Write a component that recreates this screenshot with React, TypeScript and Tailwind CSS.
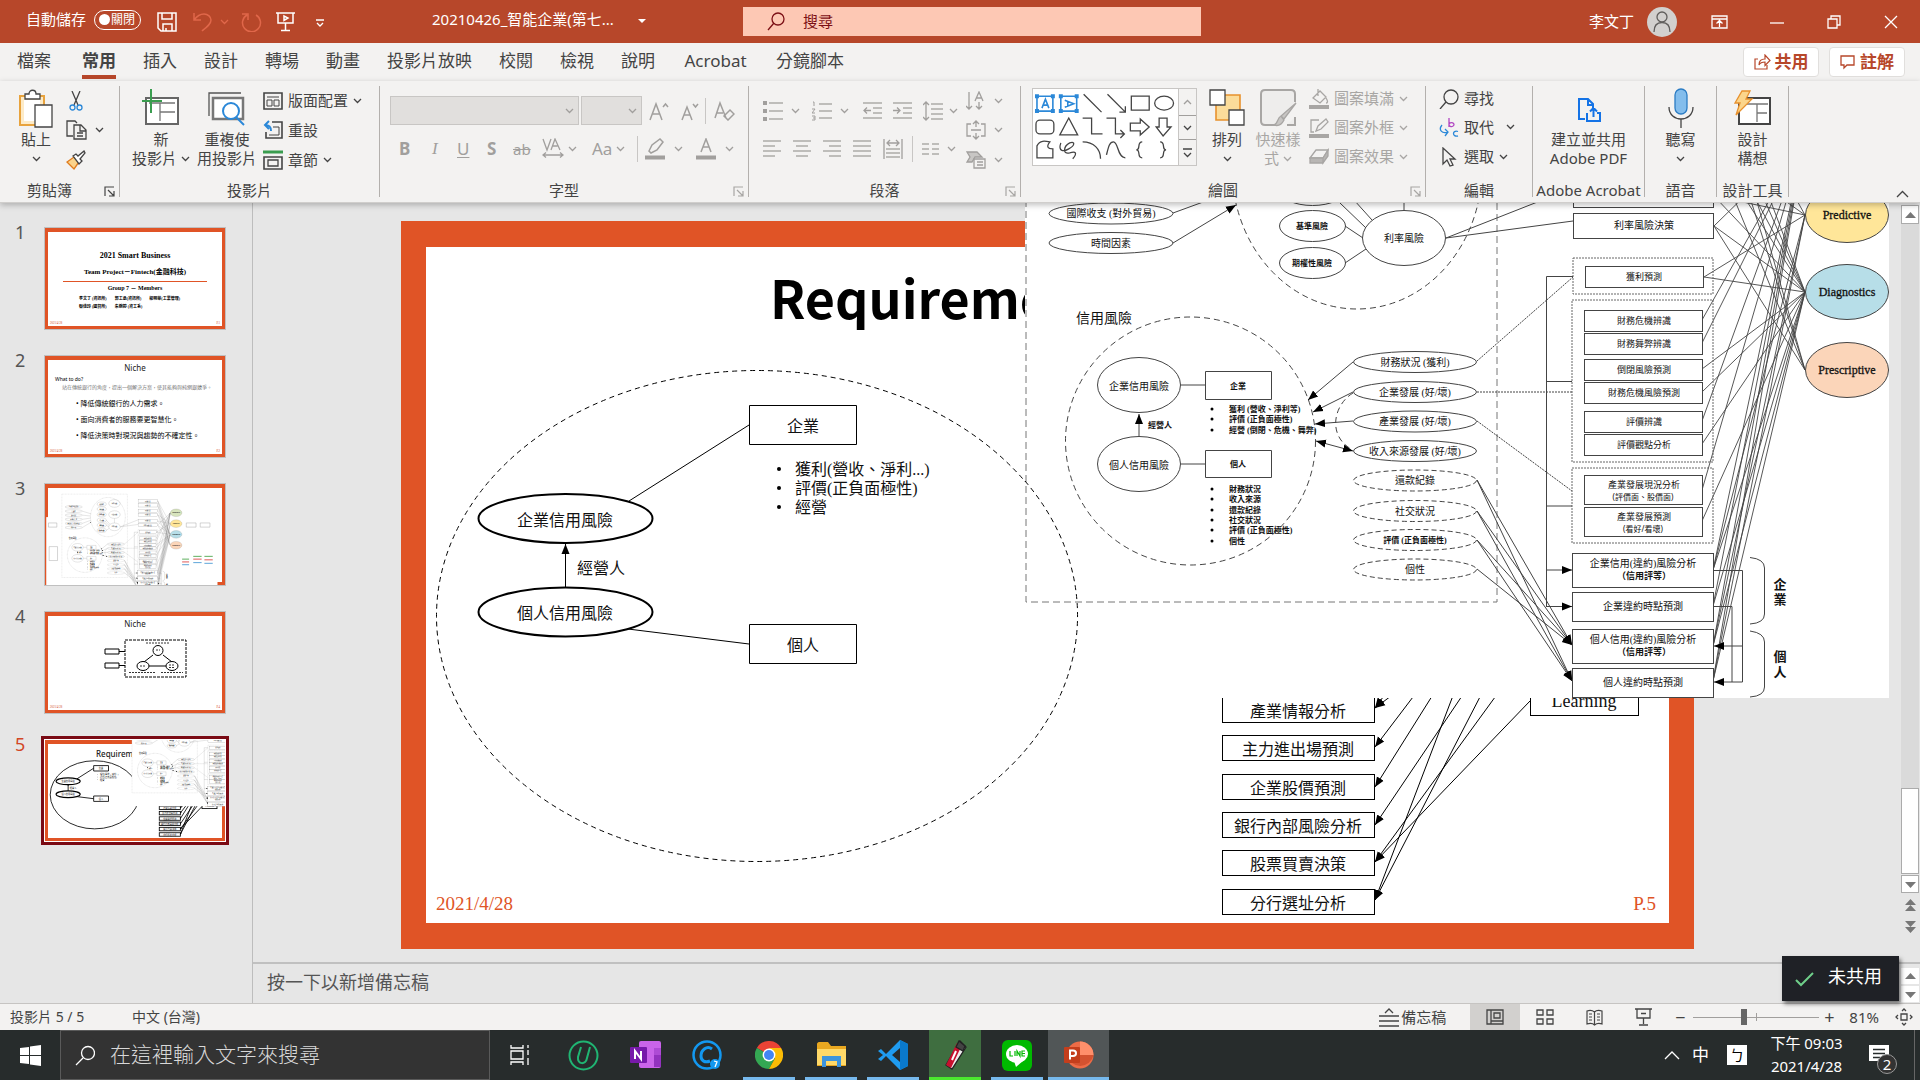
import React from "react";

const UI = "font-['Noto_Sans','Noto_Sans_CJK_TC',sans-serif]";
const SERIF = "font-['Liberation_Serif','Noto_Sans_CJK_TC',serif]";

type P = { children?: React.ReactNode };

function Icon({ w = 20, h = 20, box, children, cls = "" }: P & { w?: number; h?: number; box?: string; cls?: string }) {
  return (
    <svg width={w} height={h} viewBox={box ?? `0 0 ${w} ${h}`} fill="none" stroke="currentColor" strokeWidth="1.3" className={`shrink-0 ${cls}`} aria-hidden="true">
      {children}
    </svg>
  );
}

function Chev({ cls = "" }: { cls?: string }) {
  return (
    <Icon w={9} h={6} cls={cls}>
      <path d="M1 1l3.5 3.5L8 1" />
    </Icon>
  );
}

/* ---------- title bar ---------- */

function TitleBar() {
  return (
    <header className="flex h-[43px] shrink-0 items-center bg-[#b7472a] text-[15px] text-white">
      <div className="flex w-[743px] shrink-0 items-center pl-[26px]">
        <span className="w-[68px] pb-1">自動儲存</span>
        <button className="mb-1 flex h-[20px] w-[47px] items-center rounded-full border border-white pl-1 text-[12px] leading-4">
          <span className="mr-[1px] size-[11px] rounded-full bg-white" />
          關閉
        </button>
        <button aria-label="儲存" className="ml-4">
          <Icon w={20} h={20}><path d="M1 1h18v18H4l-3-3zM5 1v6h10V1M6 19v-7h9v7M9 19v-3" strokeWidth="1.500" /></Icon>
        </button>
        <button aria-label="復原" className="ml-4 text-[#e0674a]">
          <Icon w={19} h={20}><path d="M1 1v7h7M1 8c3-4 6-6 10-6 4 0 7 3 7 6 0 4-4 7-9 11" strokeWidth="1.500" /></Icon>
        </button>
        <Chev cls="ml-2 text-[#e0674a]" />
        <button aria-label="重做" className="ml-3 text-[#e0674a]">
          <Icon w={21} h={20}><path d="M6 3a9 9 0 1 0 9 0M1 2h6v6" strokeWidth="1.500" /></Icon>
        </button>
        <button aria-label="從首張投影片" className="ml-[14px]">
          <Icon w={19} h={20}><path d="M0 1h19M2 1v10h15V1M9.500 11v7M5 18.500h9M8 4v4.500L12 6z" strokeWidth="1.500" /></Icon>
        </button>
        <button aria-label="自訂" className="ml-[20px] mt-1">
          <Icon w={10} h={9}><path d="M1 1h8M2 4l3 3 3-3" /></Icon>
        </button>
        <span className="ml-[107px] whitespace-nowrap pb-1">20210426_智能企業(第七...</span>
        <Icon w={8} h={5} cls="ml-6"><path d="M0 0h8L4 4z" fill="#fff" stroke="none" /></Icon>
      </div>
      <label className="flex h-[29px] w-[458px] items-center bg-[#fdc8b4] pl-6 text-[#7c1016]">
        <Icon w={18} h={19}><circle cx="11" cy="7" r="6" /><path d="M7 11l-6 7" /></Icon>
        <span className="sr-only">搜尋</span>
        <input className="ml-[18px] w-full bg-transparent text-[15px] outline-none placeholder:text-[#7c1016]" placeholder="搜尋" />
      </label>
      <div className="ml-auto flex items-center pr-[22px]">
        <span>李文丁</span>
        <span className="ml-[13px] flex size-[30px] items-center justify-center rounded-full bg-[#d2d0ce] text-[#605e5c]">
          <Icon w={20} h={22}><circle cx="10" cy="6" r="5" /><path d="M2 21c0-6 3-9.500 8-9.500s8 3.500 8 9.500" /></Icon>
        </span>
        <button aria-label="功能區顯示選項" className="ml-[34px]"><Icon w={17} h={14}><path d="M1 1h15v12H1zM1 4h15M8.500 12V6M5.500 8.500l3-3 3 3" /></Icon></button>
        <button aria-label="最小化" className="ml-[42px]"><Icon w={14} h={14}><path d="M0 8h14" /></Icon></button>
        <button aria-label="還原" className="ml-[43px]"><Icon w={14} h={14}><path d="M1 4h9v9H1zM4 4V1h9v9h-3" /></Icon></button>
        <button aria-label="關閉視窗" className="ml-[43px]"><Icon w={14} h={14}><path d="M1 1l12 12M13 1L1 13" /></Icon></button>
      </div>
    </header>
  );
}

/* ---------- tabs ---------- */

const TABS = ["插入", "設計", "轉場", "動畫", "投影片放映", "校閱", "檢視", "說明", "Acrobat", "分鏡腳本"];

function Tabs() {
  return (
    <nav className="flex h-[38px] shrink-0 items-start bg-[#f3f2f1] pl-[17px] text-[17px] leading-9 text-[#444]">
      <button className="mr-[31px]">檔案</button>
      <button className="mr-[27px] h-9 border-b-4 border-[#b7472a] font-bold leading-9">常用</button>
      <div className="flex gap-[27px]">
        {TABS.map((t) => <button key={t} className={`whitespace-nowrap ${t === "Acrobat" ? "min-w-[67px]" : ""}`}>{t}</button>)}
      </div>
      <div className="ml-auto mr-[15px] mt-1 flex gap-[10px] text-[#b7472a]">
        <button className="flex h-[30px] w-[76px] items-center justify-center gap-1 rounded border border-[#e1dfdd] bg-white font-bold">
          <Icon w={17} h={16}><path d="M4 5H1v10h12v-4M5 11c0-4 2-6 6-6V1l5 5.500-5 5V8c-3 0-5 1-6 3z" strokeWidth="1.200" /></Icon>共用
        </button>
        <button className="flex h-[30px] w-[76px] items-center justify-center gap-1 rounded border border-[#e1dfdd] bg-white font-bold">
          <Icon w={16} h={15}><path d="M1 1h13v9H7l-3 3v-3H1z" /></Icon>註解
        </button>
      </div>
    </nav>
  );
}

/* ---------- ribbon ---------- */

function Group({ label, cls, launcher, dim, children }: P & { label: string; cls: string; launcher?: boolean; dim?: boolean }) {
  return (
    <section className={`relative flex h-[111px] shrink-0 flex-col justify-between border-r border-[#b3b0ad] ${cls}`}>
      <div className="flex">{children}</div>
      <h2 className="whitespace-nowrap text-center text-[15px] leading-[14px]">{label}</h2>
      {launcher && (
        <button aria-label={`${label}設定`} className={`absolute bottom-0 right-1 ${dim ? "text-[#a8a6a4]" : ""}`}>
          <Icon w={11} h={11}><path d="M1 10V1h9M4 4l6 6M10 5v5H5" strokeWidth="1.200" /></Icon>
        </button>
      )}
    </section>
  );
}

function Big({ icon, cls, children }: P & { icon: React.ReactNode; cls: string }) {
  return (
    <button className={`flex shrink-0 flex-col items-center whitespace-nowrap text-[15px] leading-[19px] ${cls}`}>
      <span className="flex h-11 items-center">{icon}</span>
      {children}
    </button>
  );
}

function Row({ icon, text, chev, cls = "h-[29px]" }: { icon: React.ReactNode; text: string; chev?: boolean; cls?: string }) {
  return (
    <button className={`flex items-center gap-[5px] whitespace-nowrap ${cls}`}>
      {icon}
      <span>{text}</span>
      {chev && <Chev />}
    </button>
  );
}

const lines = (a: number[][]) => a.map(([x1, y, x2], i) => <path key={i} d={`M${x1} ${y}H${x2}`} />);

function Ribbon() {
  return (
    <div className="relative z-10 flex h-[122px] shrink-0 border-b border-[#d0cecc] bg-[#f3f2f1] pt-[5px] text-[15px] text-[#444] shadow-[0_2px_6px_rgba(0,0,0,0.25)]">
      <Group label="剪貼簿" cls="w-[120px] pr-5" launcher>
        <Big cls="ml-[14px] w-[44px]" icon={<Icon w={36} h={39}>
          <path d="M2 7h24v29H2z" fill="#fdebc8" stroke="#e8a33d" strokeWidth="2" /><path d="M6 11h16v21H6z" stroke="none" fill="#fff" />
          <path d="M7 10V5h4c0-5 7-5 7 0h4v5z" fill="#fff" /><path d="M17 16h17v22H17z" fill="#fff" /></Icon>}>
          <span>貼上</span><Chev cls="mt-[7px]" />
        </Big>
        <div className="ml-2 flex flex-col">
          <button aria-label="剪下" className="flex h-[29px] items-center pl-[3px]"><Icon w={14} h={20}><path d="M3 0l6 14M11 0L5 14" /><circle cx="3.500" cy="16.500" r="2.500" stroke="#2b88d8" /><circle cx="10.500" cy="16.500" r="2.500" stroke="#2b88d8" /></Icon></button>
          <button aria-label="複製" className="flex h-[30px] items-center gap-2"><Icon w={21} h={20}><path d="M7 16H1V1h8l2 2M8 5h7l5 5v9H8zM14 5v6h6M11 13h6M11 16h6" /></Icon><Chev /></button>
          <button aria-label="複製格式" className="flex h-[30px] items-center"><Icon w={20} h={20}><path d="M8 7l5 5-5 7-7-7z" fill="#fbd38b" stroke="#e07b1c" /><path d="M7 6l3-2 2 2 6-5 1 2-5 6 2 2-3 3z" fill="#fff" /></Icon></button>
        </div>
      </Group>

      <Group label="投影片" cls="w-[260px]">
        <Big cls="ml-[11px] w-[60px]" icon={<Icon w={38} h={38}>
          <path d="M4 9h32v26H4z" fill="#fff" stroke="#666" strokeWidth="2" /><path d="M7 14h26M18 14v18M18 23h15" stroke="#777" /><path d="M9 0v24M0 12h20" stroke="#3a9d4f" strokeWidth="2" /></Icon>}>
          <span>新</span><span className="flex items-center gap-1">投影片<Chev /></span>
        </Big>
        <Big cls="ml-[6px] w-[60px]" icon={<Icon w={38} h={36}>
          <path d="M1 26V3h32" stroke="#555" /><path d="M5 8h30v21H5z" fill="#fff" stroke="#777" strokeWidth="2.500" /><circle cx="23" cy="21" r="8" fill="#fff" stroke="#2b88d8" strokeWidth="2" /><path d="M28 27l8 8" stroke="#2b88d8" strokeWidth="2" /></Icon>}>
          <span>重複使</span><span>用投影片</span>
        </Big>
        <div className="ml-[6px]">
          <Row text="版面配置" chev icon={<Icon><path d="M1 2h18v16H1z" strokeWidth="1.600" /><path d="M4 6h12M4 9h5v6H4zM11 9h5v6h-5z" strokeWidth="1" /></Icon>} />
          <Row text="重設" cls="h-[30px]" icon={<Icon><path d="M9 2h10v16H3v-6" strokeWidth="1.600" /><path d="M10 7h6v8H6" strokeWidth="1" /><path d="M6 1L2 5l4 4M2 5c5 0 6 2 6 6" stroke="#2b88d8" strokeWidth="2" /></Icon>} />
          <Row text="章節" cls="h-[30px]" chev icon={<Icon><path d="M0 2h20" stroke="#3a9d4f" strokeWidth="3" /><path d="M1 7h18v12H1z" strokeWidth="1.600" /><path d="M5 10h10v6H5z" /></Icon>} />
        </div>
      </Group>

      <Group label="字型" cls="w-[369px]" launcher dim>
        <div className="pl-[10px] text-[#a19f9d]">
          <div className="mt-[10px] flex h-[29px] items-center">
            <select aria-label="字型" className="h-[29px] w-[189px] appearance-none border border-[#c8c6c4] bg-[#e1dfdd]" />
            <Chev cls="-ml-[14px]" />
            <select aria-label="字型大小" className="ml-[7px] h-[29px] w-[61px] appearance-none border border-[#c8c6c4] bg-[#e1dfdd]" />
            <Chev cls="-ml-[14px]" />
            <button aria-label="放大字型" className="ml-[12px]"><Icon w={20} h={20}><path d="M1 19L7 3l6 16M3 13h8M14 6l2.500-3L19 6" strokeWidth="1.500" /></Icon></button>
            <button aria-label="縮小字型" className="ml-[12px]"><Icon w={20} h={20}><path d="M1 19L6 6l5 13M3 14h6M12 3l2.500 3L17 3" strokeWidth="1.500" /></Icon></button>
            <span className="ml-[4px] h-[26px] w-px bg-[#c8c6c4]" />
            <button aria-label="清除格式" className="ml-2"><Icon w={21} h={20}><path d="M1 17L6 2l6 15M3 12h6M10 15l6-6 4 4-6 6z" strokeWidth="1.500" /></Icon></button>
          </div>
          <div className="mt-[9px] flex h-[29px] items-center text-[17px] leading-5">
            <button className="ml-[9px] w-[29px] text-left font-bold">B</button>
            <button className="w-[29px] pl-1 text-left font-['Liberation_Serif'] italic">I</button>
            <button className="w-[30px] text-left underline underline-offset-2">U</button>
            <button className="w-[26px] text-left font-bold">S</button>
            <button className="w-[29px] text-left text-[15px] line-through">ab</button>
            <button aria-label="字元間距"><Icon w={22} h={22}><path d="M1 1l4 11L9 1M9 12l4-11 5 11M10.500 8h5M1 17h20M4 14.500L1 17l3 2.500M18 14.500l3 2.500-3 2.500" /></Icon></button>
            <Chev cls="ml-1" />
            <button className="ml-[15px]">Aa</button>
            <Chev cls="ml-1" />
            <span className="ml-3 h-[26px] w-px bg-[#c8c6c4]" />
            <button aria-label="醒目提示" className="ml-[7px]"><Icon w={21} h={22}><path d="M4 13l3-6 8-6 3 3-6 8-6 3z" strokeWidth="1.500" /><path d="M0 19.500h20" strokeWidth="4" /></Icon></button>
            <Chev cls="ml-2" />
            <button aria-label="字型色彩" className="ml-[13px]"><Icon w={21} h={22}><path d="M5 14l5-13 5 13M7 9h6" strokeWidth="1.500" /><path d="M0 19.500h20" strokeWidth="4" /></Icon></button>
            <Chev cls="ml-2" />
          </div>
        </div>
      </Group>

      <Group label="段落" cls="w-[272px]" launcher dim>
        <div className="pl-[14px] text-[#a19f9d]">
          <div className="mt-[10px] flex h-[29px] items-center">
            <Icon w={20} h={20}>{lines([[6, 2, 20], [6, 10, 20], [6, 18, 20]])}<path d="M0 2h4M0 10h4M0 18h4" strokeWidth="4" /></Icon><Chev cls="ml-2" />
            <Icon w={20} h={20} cls="ml-3">{lines([[7, 3, 20], [7, 10, 20], [7, 17, 20]])}<path d="M1 1h1v4M0 8h3l-3 4h3M0 15h3v4H0M1 17h2" strokeWidth="1" /></Icon><Chev cls="ml-2" />
            <Icon w={20} h={20} cls="ml-[14px]">{lines([[0, 2, 19], [10, 7, 19], [10, 12, 19], [0, 17, 19]])}<path d="M8 9.500H1M4 6.500l-3 3 3 3" /></Icon>
            <Icon w={20} h={20} cls="ml-[10px]">{lines([[0, 2, 19], [10, 7, 19], [10, 12, 19], [0, 17, 19]])}<path d="M0 9.500h7M4 6.500l3 3-3 3" /></Icon>
            <Icon w={20} h={20} cls="ml-[10px]">{lines([[8, 3, 20], [8, 8, 20], [8, 13, 20], [8, 18, 20]])}<path d="M3 1v18M0 4l3-3 3 3M0 16l3 3 3-3" /></Icon><Chev cls="ml-[6px]" />
          </div>
          <div className="mt-[9px] flex h-[29px] items-center">
            <Icon w={20} h={18}>{lines([[0, 1, 18], [0, 6, 12], [0, 11, 18], [0, 16, 12]])}</Icon>
            <Icon w={20} h={18} cls="ml-[10px]">{lines([[0, 1, 18], [3, 6, 15], [0, 11, 18], [3, 16, 15]])}</Icon>
            <Icon w={20} h={18} cls="ml-[10px]">{lines([[0, 1, 18], [6, 6, 18], [0, 11, 18], [6, 16, 18]])}</Icon>
            <Icon w={20} h={18} cls="ml-[10px]">{lines([[0, 1, 18], [0, 6, 18], [0, 11, 18], [0, 16, 18]])}</Icon>
            <Icon w={20} h={20} cls="ml-[10px]">{lines([[3, 10, 17], [3, 14, 17], [3, 18, 17]])}<path d="M1 0v20M19 0v20M4 4h12M7 1L4 4l3 3M13 1l3 3-3 3" /></Icon>
            <span className="ml-[9px] h-[26px] w-px bg-[#c8c6c4]" />
            <Icon w={17} h={12} cls="ml-[9px]">{lines([[0, 1, 7], [0, 6, 7], [0, 11, 7], [10, 1, 17], [10, 6, 17], [10, 11, 17]])}</Icon><Chev cls="ml-2" />
          </div>
        </div>
        <div className="ml-auto mr-[17px] text-[#a19f9d]">
          <button aria-label="文字方向" className="flex h-[29px] items-center gap-2"><Icon><path d="M3 1v17M0 15l3 3 3-3M13 11v7M10 15l3 3 3-3M9 10l4-9 4 9M10 7h6" /></Icon><Chev /></button>
          <button aria-label="對齊文字" className="flex h-[30px] items-center gap-2"><Icon><path d="M5 4H1v12h4M15 4h4v12h-4M5 10h10M10 1v6M10 13v6M7 4l3-3 3 3M7 16l3 3 3-3" /></Icon><Chev /></button>
          <button aria-label="SmartArt" className="flex h-[30px] items-center gap-2"><Icon><path d="M1 2h10l5 5H9l-3 5H1l3-5z" fill="#c8c6c4" /><path d="M8 9h11v9H8z" fill="#f3f2f1" /><path d="M11 12h6M11 15h6" /></Icon><Chev /></button>
        </div>
      </Group>

      <Group label="繪圖" cls="w-[405px]" launcher dim>
        <div className="ml-[11px] mt-[2px] flex h-[78px] w-[165px] shrink-0 border border-[#c8c6c4] bg-white">
          <svg viewBox="0 0 146 76" className="h-[76px] w-[146px]" fill="none" stroke="#444" strokeWidth="1.300" aria-hidden="true">
            <g stroke="#2b88d8" strokeWidth="1.600">
              <path d="M4 7h16v15H4zM28 7h16v15H28z" /><path d="M9 19l3.500-9 3.500 9M10 16h5M32 11l9 3.500-9 3.500M35 12v5" />
              <g fill="#2b88d8" stroke="none"><path d="M2 5h4v4H2zM18 5h4v4h-4zM2 20h4v4H2zM18 20h4v4h-4zM26 5h4v4h-4zM42 5h4v4h-4zM26 20h4v4h-4zM42 20h4v4h-4z" /></g>
            </g>
            <path d="M51 5l18 18M75 5l18 18M93 17v6h-6M99 7h18v14H99z" /><ellipse cx="132" cy="14" rx="9.500" ry="7" />
            <rect x="3" y="31" width="18" height="14" rx="4" /><path d="M36 29l9 17H27zM50 29h9v16h11M74 29h9v16h9M88 41l4 4-4 4M98 34h10v-4l9 8-9 8v-4H98zM127 29h8v9h4l-8 9-7-9h3z" />
            <path d="M4 69V57c3-6 8-5 13-4-4 5-2 7 3 7v9zM28 54c-3 9 3 9 8 6 6-3 7-8 1-6-6 3-8 12 0 10 6-2 8 0 3 6M50 53c11 0 18 7 18 17M74 66c2-8 3-13 7-13 5 0 4 16 12 16M110 53c-6 0-1 8-6 8 5 0 0 8 6 8M128 53c6 0 1 8 6 8-5 0 0 8-6 8" />
          </svg>
          <div className="flex flex-col border-l border-[#c8c6c4] bg-[#f3f2f1]">
            <button aria-label="上一列" className="flex h-[26px] w-[17px] items-center justify-center text-[#a19f9d]"><Icon w={9} h={6}><path d="M1 5l3.500-3.500L8 5" /></Icon></button>
            <button aria-label="下一列" className="flex h-[25px] w-[17px] items-center justify-center border-y border-[#a19f9d]"><Chev /></button>
            <button aria-label="其他" className="flex h-[25px] w-[17px] items-center justify-center"><Icon w={9} h={10}><path d="M0 1h9M1 5l3.500 3.500L8 5" /></Icon></button>
          </div>
        </div>
        <Big cls="ml-[8px] w-[44px]" icon={<Icon w={36} h={38}><path d="M7 6h24v25H7z" fill="#fbdc9a" stroke="#e8912d" strokeWidth="1.600" /><path d="M1 1h15v15H1zM20 21h15v15H20z" fill="#fff" /></Icon>}>
          <span>排列</span><Chev cls="mt-[7px]" />
        </Big>
        <Big cls="ml-[5px] w-[48px] text-[#a8a6a4]" icon={<Icon w={37} h={38}><path d="M16 36H5c-3 0-4-1-4-4V5c0-3 1-4 4-4h26c3 0 4 1 4 4v8M35 28v8h-8" strokeWidth="2" fill="#eeedec" /><path d="M36 14L24 30l-3-3zM21 27l3 4c-3 6-7 6-10 5 4-1 3-7 7-9z" fill="#c8c6c4" /></Icon>}>
          <span>快速樣</span><span className="flex items-center gap-1">式<Chev /></span>
        </Big>
        <div className="-mt-[2px] ml-[7px] text-[#a8a6a4]">
          <Row text="圖案填滿" chev icon={<Icon><path d="M4 9l7-7 6 6-6 6zM9 0v7M17 9c2 3 2 5 0 5" /><path d="M0 18h20" strokeWidth="4" /></Icon>} />
          <Row text="圖案外框" chev icon={<Icon><path d="M10 2H2v12h3M7 13l2-5 8-7 2 3-7 7z" /><path d="M0 18h20" strokeWidth="4" /></Icon>} />
          <Row text="圖案效果" chev icon={<Icon><path d="M1 11L7 3h12l-5 8z" /><path d="M1 11h13v5H1zM14 11l5-8v6l-5 7z" fill="#b8b6b4" /></Icon>} />
        </div>
      </Group>

      <Group label="編輯" cls="w-[107px]">
        <div className="-mt-[2px] ml-[13px]">
          <Row text="尋找" icon={<Icon><circle cx="12" cy="8" r="7" /><path d="M7 13l-6 7" /></Icon>} />
          <Row text="取代" icon={<Icon><path d="M10 0v9M10 6.500a2.500 2 0 1 1 0 .1" stroke="#b146c2" /><path d="M3 7c-4 5 0 9 6 7M6 11l3 3-3 4" stroke="#2b88d8" /><path d="M19 13.500c-6-2-6 6 0 4.500" stroke="#2b88d8" /></Icon>} />
          <Row text="選取" chev icon={<Icon><path d="M4 1v16l4-4 3 6 3-1-3-6h5z" /></Icon>} />
        </div>
        <Chev cls="-ml-[2px] mt-[38px]" />
      </Group>

      <Group label="Adobe Acrobat" cls="w-[112px]">
        <Big cls="w-full" icon={<Icon w={24} h={26} cls="mt-1 text-[#1473e6]"><path d="M8 22H2V2h9l5 5v4M11 2v6h5M10 16v8h13v-8h-3M16.500 20v-8M13 14.500l3.500-3.500 3.500 3.500" strokeWidth="2" /></Icon>}>
          <span>建立並共用</span><span>Adobe PDF</span>
        </Big>
      </Group>

      <Group label="語音" cls="w-[72px]">
        <Big cls="w-full" icon={<Icon w={26} h={40}><rect x="7" y="1" width="12" height="25" rx="6" fill="#83bdec" stroke="#2b7cc4" /><path d="M1 19c0 16 24 16 24 0M13 31v9" /></Icon>}>
          <span>聽寫</span><Chev cls="mt-[7px]" />
        </Big>
      </Group>

      <Group label="設計工具" cls="w-[72px]">
        <Big cls="w-full" icon={<Icon w={38} h={36}><path d="M5 8h31v26H5z" fill="#fff" strokeWidth="2" /><path d="M8 14h26M23 14v18M23 23h10" stroke="#777" /><path d="M8 1h8l-4 8h6L2 25l4-12H1z" fill="#fbd58b" stroke="#e8912d" /></Icon>}>
          <span>設計</span><span>構想</span>
        </Big>
      </Group>
      <button aria-label="摺疊功能區" className="mb-[4px] ml-auto mr-[11px] self-end"><Icon w={13} h={8}><path d="M1 7l5.500-5.500L12 7" /></Icon></button>
    </div>
  );
}

/* ---------- diagrams ---------- */

function T({ x, y, s = 10, a = "middle", b, serif = true, children }: P & { x: number; y: number; s?: number; a?: "middle" | "start"; b?: boolean; serif?: boolean }) {
  return (
    <text x={x} y={y} fontSize={s} textAnchor={a} dominantBaseline="central" fill="#111" fontWeight={b ? 700 : 400} className={serif ? SERIF : UI}>
      {children}
    </text>
  );
}

function Markers() {
  return (
    <defs>
      <marker id="tip" viewBox="0 0 10 10" refX="10" refY="5" markerWidth="10" markerHeight="10" markerUnits="userSpaceOnUse" orient="auto-start-reverse">
        <path d="M0 1l10 4-10 4z" fill="#000" stroke="none" />
      </marker>
    </defs>
  );
}

const FACTORS: [number, string][] = [[95, "消費者物價指數"], [125, "失業率"], [154, "貨幣供給"], [184, "經濟成長率"], [213.5, "國際收支 (對外貿易)"], [243, "時間因素"]];
const RATE_RISKS: [number, string][] = [[75, "信用利差"], [110, "收益風險"], [150, "殖利率風險"], [190, "重訂風險"], [226, "基準風險"], [263, "期權性風險"]];
const MARKET_RISKS: [number, string][] = [[70, "匯率風險"], [150, "股價風險"], [238, "利率風險"]];
const SIGNALS: [number, string, boolean][] = [
  [362, "財務狀況 (獲利)", false], [392, "企業發展 (好/壞)", false], [421.5, "產業發展 (好/壞)", false], [451, "收入來源發展 (好/壞)", false],
  [480.5, "還款紀錄", true], [511, "社交狀況", true], [540, "評價 (正負面極性)", true], [569.5, "個性", true],
];
const TASKS: [number, number, string, string?][] = [
  [266, 21, "獲利預測"], [310, 21, "財務危機辨識"], [333, 21, "財務舞弊辨識"], [359, 21, "倒閉風險預測"], [382, 21, "財務危機風險預測"],
  [411, 21, "評價辨識"], [434, 21, "評價觀點分析"], [475, 29, "產業發展現況分析", "(評價面、股價面)"], [507, 29, "產業發展預測", "(看好/看壞)"],
];
const OUTCOMES: [number, number, string, string?][] = [
  [553, 34, "企業信用(違約)風險分析", "（信用評等）"], [592, 29, "企業違約時點預測"], [629, 34, "個人信用(違約)風險分析", "（信用評等）"], [668, 29, "個人違約時點預測"],
];
const GOALS: [number, string, string][] = [[137, "Descriptive", "#d7e4bd"], [215, "Predictive", "#ffe699"], [292, "Diagnostics", "#b7dee8"], [370, "Prescriptive", "#fbd5b9"]];
const FAN: [number, number, number][] = [
  [1714, 226, 137], [1714, 226, 292], [1714, 226, 370], [1714, 196, 215], [1714, 196, 292], [1714, 150, 215], [1714, 150, 292], [1714, 150, 370],
  [1714, 120, 292], [1714, 85, 292], [1714, 85, 370], [1714, 51, 292], [1714, 51, 215], [1714, 51, 370], [1704, 277, 215], [1704, 277, 292],
  [1702, 320, 137], [1702, 343, 137], [1702, 369, 292], [1702, 392, 292], [1702, 421, 137], [1702, 444, 292], [1702, 490, 137], [1702, 521, 292],
  [1713, 570, 137], [1713, 570, 215], [1713, 570, 292], [1713, 606, 137], [1713, 606, 292], [1713, 646, 137], [1713, 646, 215], [1713, 646, 292],
  [1713, 681, 137], [1713, 681, 215], [1713, 681, 292],
];

/* `top` is the highest row whose nodes are drawn. */
function RiskPicture({ top = 185 }: { top?: number }) {
  const shown = (r: { 0: number }) => r[0] >= top;
  return (
    <g fill="none" stroke="#444" strokeWidth="1">
      <rect x="1025" y="-30" width="864" height="728" fill="#fff" stroke="none" />
      <rect x="1026" y="3" width="471" height="599" strokeDasharray="7 4" stroke="#777" />
      <ellipse cx="1357" cy="168" rx="125" ry="141" strokeDasharray="6 4" />
      {FACTORS.filter(shown).map(([y, t]) => (
        <g key={t}><ellipse cx="1111" cy={y} rx="62" ry="10.500" /><g stroke="none"><T x={1111} y={y}>{t}</T></g></g>
      ))}
      <path d="M1173 213L1236 190M1173 184L1232 175M1173 154L1232 160M1173 125L1236 145" />
      <path d="M1173 243L1236 205" markerEnd="url(#tip)" />
      {RATE_RISKS.filter(shown).map(([y, t]) => (
        <g key={t}><ellipse cx="1312.500" cy={y} rx="33" ry="15.500" />{(y > 200 || top < 0) && <g stroke="none"><T x={1312} y={y} s={8} b>{t}</T></g>}</g>
      ))}
      {MARKET_RISKS.filter(shown).map(([y, t]) => (
        <g key={t}><ellipse cx="1404" cy={y} rx="41.500" ry="27.500" /><g stroke="none"><T x={1404} y={y}>{t}</T></g></g>
      ))}
      <path d="M1345 226l18 12M1345 263l21-14M1340 203l26 25M1345 190l27 30M1404 178v32M1446 238l127-50M1446 238l127-17" />
      <g stroke="none"><T x={1076} y={318} s={14} a="start">信用風險</T></g>
      <ellipse cx="1190.500" cy="441" rx="125" ry="124" strokeDasharray="6 4" />
      <ellipse cx="1139" cy="385" rx="41.500" ry="27.500" /><ellipse cx="1139" cy="464" rx="41.500" ry="27.500" />
      <path d="M1139 436v-22" markerEnd="url(#tip)" />
      <path d="M1181 385h24M1181 464h24M1205.500 371.500h66v28h-66zM1205.500 450.500h66v27h-66z" />
      <g stroke="none">
        <T x={1139} y={386}>企業信用風險</T><T x={1139} y={465}>個人信用風險</T><T x={1148} y={425} s={8} a="start" b>經營人</T>
        <T x={1238} y={386} s={8} b>企業</T><T x={1238} y={464} s={8} b>個人</T>
        {([[409, "獲利 (營收、淨利等)"], [419, "評價 (正負面極性)"], [430, "經營 (倒閉、危機、舞弊)"], [489, "財務狀況"], [499, "收入來源"], [510, "還款紀錄"], [520, "社交狀況"], [530, "評價 (正負面極性)"], [541, "個性"]] as [number, string][]).map(([y, t]) => (
          <g key={y}><circle cx="1212" cy={y} r="1.500" fill="#000" /><T x={1229} y={y} s={8} a="start" b>{t}</T></g>
        ))}
      </g>
      {SIGNALS.map(([y, t, d], i) => (
        <g key={t}><ellipse cx="1415" cy={y} rx="61.500" ry="10.500" strokeDasharray={d ? "5 3" : undefined} /><g stroke="none"><T x={1415} y={y} s={i === 6 ? 8 : 10} b={i === 6}>{t}</T></g></g>
      ))}
      <path d="M1353 362l-45 38" markerEnd="url(#tip)" /><path d="M1353 392l-40 20" markerEnd="url(#tip)" /><path d="M1353 421l-38 3" markerEnd="url(#tip)" />
      <path d="M1316 441l37 10" markerStart="url(#tip)" markerEnd="url(#tip)" />
      <path d="M1353 393c-20 12-26 44 0 57" strokeDasharray="6 4" />
      <path d="M1477 361L1573 277M1477 392h95M1477 421l95 70" strokeDasharray="2 1" />
      {[[480, 645], [480, 681], [511, 645], [511, 681], [540, 645], [540, 681], [569, 645]].map(([a, b]) => (
        <path key={`${a}-${b}`} d={`M1477 ${a}L1572 ${b}`} markerEnd="url(#tip)" />
      ))}
      {FAN.map(([x, y, g], i) => <path key={i} d={`M${x} ${y}L1805 ${g}`} strokeWidth="0.900" />)}
      <g strokeDasharray="2 1" stroke="#666"><rect x="1573" y="258" width="140" height="36" /><rect x="1572" y="300" width="141" height="162" /><rect x="1572" y="468" width="141" height="75" /></g>
      {[40, 70, 110, 140, 182, 213].map((y) => (
        <g key={y}><rect x="1573.500" y={y + 0.5} width="140" height="25" fill="#fff" />{(y === 213 || top < 0) && <g stroke="none"><T x={1644} y={y + 12.5}>{y === 213 ? "利率風險決策" : "風險決策"}</T></g>}</g>
      ))}
      {TASKS.map(([y, h, t, u]) => (
        <g key={t}><rect x={y === 266 ? 1585.5 : 1584.5} y={y + 0.5} width="118" height={h} fill="#fff" />
          <g stroke="none"><T x={1644} y={u ? y + 9 : y + 10.5} s={9} serif={false}>{t}</T>{u && <T x={1643} y={y + 21} s={8} serif={false}>{u}</T>}</g></g>
      ))}
      {OUTCOMES.map(([y, h, t, u]) => (
        <g key={t}><rect x="1572.500" y={y + 0.5} width="141" height={h} fill="#fff" />
          <g stroke="none"><T x={1643} y={u ? y + 10 : y + h / 2}>{t}</T>{u && <T x={1644} y={y + 23} s={9} b>{u}</T>}</g></g>
      ))}
      <path d="M1573 276.500h-26.500V606M1546 381.500h26M1546 506h26" /><path d="M1546 570h26" markerEnd="url(#tip)" /><path d="M1546 606.500h26" markerEnd="url(#tip)" />
      <path d="M1713 570.500h29.500V682H1714" markerEnd="url(#tip)" /><path d="M1742 646h-28" markerEnd="url(#tip)" /><path d="M1713 606.500h19V682" />
      <path d="M1750 557.500Q1764.500 559 1764.500 568V614Q1764.500 623 1750 624M1750 631Q1764.500 633 1764.500 642V687Q1764.500 696 1750 697" />
      <g stroke="none"><T x={1780} y={584} s={13} b>企</T><T x={1780} y={599} s={13} b>業</T><T x={1780} y={656} s={13} b>個</T><T x={1780} y={672} s={13} b>人</T></g>
      {GOALS.filter(shown).map(([y, t, f]) => (
        <g key={t}><ellipse cx="1847" cy={y} rx="41.500" ry="27.500" fill={f} /><text x="1847" y={y} fontSize="12" stroke="#111" strokeWidth="0.300" fill="#111" textAnchor="middle" dominantBaseline="central" className={SERIF}>{t}</text></g>
      ))}
    </g>
  );
}

const ANALYSES: [number, string][] = [[697, "產業情報分析"], [735, "主力進出場預測"], [774, "企業股價預測"], [812, "銀行內部風險分析"], [850, "股票買賣決策"], [889, "分行選址分析"]];

function CreditDiagram({ bold }: { bold?: boolean }) {
  return (
    <g fill="none" stroke="#000" strokeWidth={bold ? 6 : 1}>
      <ellipse cx="757" cy="616" rx="320.500" ry="245.500" strokeDasharray={bold ? undefined : "5 4"} />
      <g strokeWidth={bold ? 8 : 2}><ellipse cx="565.500" cy="518.500" rx="87" ry="24.500" /><ellipse cx="565.500" cy="612" rx="87" ry="24.500" /></g>
      <path d="M629 501L749 425M628 629l121 15M749.500 405.500h107v39h-107zM749.500 624.500h107v39h-107z" />
      <path d="M565.500 588v-44" markerEnd="url(#tip)" />
      <g stroke="none">
        <T x={565} y={520} s={16}>企業信用風險</T><T x={565} y={613} s={16}>個人信用風險</T><T x={577} y={568} s={16} a="start">經營人</T>
        <T x={803} y={426} s={16}>企業</T><T x={803} y={645} s={16}>個人</T>
        {([[469, "獲利(營收、淨利...)"], [488, "評價(正負面極性)"], [507, "經營"]] as [number, string][]).map(([y, t]) => (
          <g key={t}><circle cx="779" cy={y} r="2" fill="#000" /><T x={795} y={y} s={16} a="start">{t}</T></g>
        ))}
      </g>
      {ANALYSES.map(([y, t]) => (
        <g key={t}><rect x="1222.500" y={y + 0.5} width="152" height="25" /><g stroke="none"><T x={1298} y={y + 14} s={16}>{t}</T></g></g>
      ))}
      {[[1386, 693, 708], [1395, 693, 708], [1416, 693, 747], [1434, 693, 787], [1464, 693, 825], [1498, 693, 862], [1530, 701, 862], [1454, 693, 900], [1482, 693, 900]].map(([x, y, t]) => (
        <path key={`${x}`} d={`M${x} ${y}L1375 ${t}`} markerEnd="url(#tip)" />
      ))}
      <rect x="1530.500" y="680" width="108" height="35.500" /><g stroke="none"><T x={1584} y={701} s={18}>Learning</T></g>
    </g>
  );
}

/* ---------- thumbnails ---------- */

function Thumb({ n, title, active, children }: P & { n: number; title?: string; active?: boolean }) {
  return (
    <li className="flex items-start pl-[15px]">
      <span className={`w-[29px] text-[18px] leading-[10px] ${active ? "text-[#d24726]" : "text-[#555]"}`}>{n}</span>
      <button aria-label={`投影片 ${n}`} className={`relative h-[103px] w-[182px] overflow-hidden border border-[#c0c0c0] bg-white ${active ? "border-white outline-3 outline-[#7a0a14]" : ""}`}>
        <span className="flex h-full flex-col border-[3px] border-t-4 border-[#e05426]">
          {title && <span className="pt-[3px] text-center text-[8px] leading-[10px] text-[#222]">{title}</span>}
          {n !== 3 && n !== 5 && (
            <span className={`mt-auto flex justify-between px-[2px] text-[3px] leading-[6px] text-[#d24726] ${SERIF} order-last`}><span>2021/4/28</span><span>P.{n}</span></span>
          )}
          {n !== 3 && n !== 5 && children}
        </span>
        {(n === 3 || n === 5) && children}
      </button>
    </li>
  );
}

function Thumbnails() {
  return (
    <aside className="w-[253px] shrink-0 border-r border-[#bdbdbd]">
      <ol className="flex flex-col gap-[25px] pt-6">
        <Thumb n={1}>
          <span className={`flex flex-col items-center whitespace-nowrap pt-[18px] font-bold text-black ${SERIF}`}>
            <span className="text-[8px] leading-[12px]">2021 Smart Business</span>
            <span className="pt-1 text-[7px] leading-[12px]">Team Project－Fintech(金融科技)</span>
            <span className="mt-[3px] h-px w-[144px] bg-[#e05426]" />
            <span className="text-[6px] leading-[13px]">Group 7 － Members</span>
            <span className="w-[112px] text-left text-[4px] leading-2">李文丁 (資訊所)　　郭工丞(資訊所)　　楊明華(工業管理)<br />蔡佳玲 (國貿所)　　朱婉婷 (資工系)</span>
          </span>
        </Thumb>
        <Thumb n={2} title="Niche">
          <span className="flex flex-col whitespace-nowrap text-left text-black">
            <span className="pl-[7px] pt-[2px] text-[5px] leading-2">What to do?</span>
            <span className="pl-[14px] text-[5px] leading-2 text-[#777]">站在傳統銀行的角度，提出一個解決方案，使其能夠與純網銀競爭。</span>
            <span className="flex flex-col gap-1 pl-7 pt-[7px] text-[7px] leading-[12px]"><span>• 降低傳統銀行的人力需求。</span><span>• 面向消費者的服務要更智慧化。</span><span>• 降低決策時對現況與趨勢的不確定性。</span></span>
          </span>
        </Thumb>
        <Thumb n={3}>
          <svg viewBox="905 -69 1293 724" className="absolute inset-0 h-full w-full" aria-hidden="true">
            <Markers />
            <rect x="914" y="168" width="1230" height="500" fill="#fff" />
            <g strokeWidth="2"><RiskPicture top={-50} /></g>
            <g fill="#fff" stroke="#999" strokeWidth="3"><path d="M930 210h60v30h-60zM935 380h60v100h-60zM1920 210h70v30h-70zM2020 210h70v30h-70z" /></g>
            <g strokeWidth="7"><path d="M1890 470h50M2050 450h60M1970 450h60" stroke="#5cae5c" /><path d="M1890 490h50M1970 470h60M2050 475h60" stroke="#df5555" /><path d="M1890 510h50M1970 495h60M2050 500h60" stroke="#5aa3d8" /></g>
          </svg>
        </Thumb>
        <Thumb n={4} title="Niche">
          <svg viewBox="0 0 174 70" className="h-[70px] w-full" fill="none" stroke="#000" aria-hidden="true">
            <path d="M77 11h61v37H77z" strokeDasharray="3 1" />
            <path d="M57 20h14v5H57zM57 34h14v5H57zM71 22.500h6M71 36.500h6M105 26l-9 7M115 26l9 7M101 37h17" />
            <circle cx="110" cy="21.500" r="5" fill="#fff" /><ellipse cx="95" cy="37" rx="6" ry="4.500" fill="#fff" /><ellipse cx="124" cy="37" rx="6" ry="4.500" fill="#fff" />
            <path d="M98 14h23M81 43.500h26M113 43.500h22M108 21h4M92 37h6M121 36h6M121 38.500h6" strokeDasharray="2 1" strokeWidth="0.800" />
          </svg>
        </Thumb>
        <Thumb n={5} active>
          <span className="absolute left-[51px] top-[9px] text-[8px] font-medium leading-[10px] text-[#222]">Requireme</span>
          <svg viewBox="401 221 1293 728" className="absolute inset-0 h-full w-full" aria-hidden="true">
            <CreditDiagram bold />
            <RiskPicture />
          </svg>
        </Thumb>
      </ol>
    </aside>
  );
}

/* ---------- editor ---------- */

function Tri({ d }: { d: string }) {
  return <Icon w={11} h={16}><path d={d} fill="#777" stroke="none" /></Icon>;
}

function Editor() {
  return (
    <main className="flex min-w-0 flex-1 flex-col">
      <div className="flex min-h-0 flex-1">
        <div className="relative min-w-0 flex-1 overflow-hidden">
          <article className="ml-[148px] mr-[206px] mt-[18px] flex h-[728px] flex-col border-x-[25px] border-y-[26px] border-[#e05426] bg-white">
            <h1 className="whitespace-nowrap pl-[344px] pt-[10px] font-['Noto_Sans_CJK_TC',sans-serif] text-[52px] font-bold leading-[80px] text-black">Requireme</h1>
            <footer className={`mt-auto flex justify-between pb-2 pl-[10px] pr-[13px] text-[19px] leading-[22px] text-[#e05426] ${SERIF}`}>
              <span>2021/4/28</span><span>P.5</span>
            </footer>
          </article>
          <svg viewBox="253 203 1647 759" preserveAspectRatio="xMinYMin meet" className="absolute inset-0 h-full w-full" role="img" aria-label="信用風險圖">
            <Markers />
            <CreditDiagram />
            <RiskPicture />
            <path d="M1025 481A320.500 245.500 0 0 1 1059 698" fill="none" stroke="#000" strokeDasharray="5 4" />
          </svg>
        </div>
        <div className="flex w-5 shrink-0 flex-col items-center bg-[#e6e6e6] pt-[2px]">
          <button aria-label="向上捲動" className="flex h-[19px] w-[18px] items-center justify-center border border-[#ababab] bg-white"><Tri d="M0 11l5.500-6L11 11z" /></button>
          <div className="flex w-[18px] flex-1 flex-col justify-end bg-[#dadada]"><div className="h-[86px] border border-[#ababab] bg-white" /></div>
          <button aria-label="向下捲動" className="mt-px flex h-[18px] w-[18px] items-center justify-center border border-[#ababab] bg-white"><Tri d="M0 6l5.500 6L11 6z" /></button>
          <button aria-label="上一張投影片" className="mt-1"><Tri d="M0 8l5.500-6L11 8zM0 14l5.500-6L11 14z" /></button>
          <button aria-label="下一張投影片" className="mb-[27px] mt-[6px]"><Tri d="M0 2l5.500 6L11 2zM0 8l5.500 6L11 8z" /></button>
        </div>
      </div>
      <div className="flex h-[41px] shrink-0 border-t-2 border-[#c0c0c0]">
        <label className="flex flex-1 items-center pb-[3px] pl-[14px]">
          <span className="sr-only">備忘稿</span>
          <input className="w-full bg-transparent text-[18px] outline-none placeholder:text-[#555]" placeholder="按一下以新增備忘稿" />
        </label>
        <div className="flex w-5 flex-col items-center gap-[2px] pt-1">
          <button aria-label="備忘稿向上" className="flex h-4 w-[18px] items-center justify-center bg-white"><Tri d="M0 11l5.500-6L11 11z" /></button>
          <button aria-label="備忘稿向下" className="flex h-4 w-[18px] items-center justify-center bg-white"><Tri d="M0 6l5.500 6L11 6z" /></button>
        </div>
      </div>
    </main>
  );
}

function StatusBar() {
  return (
    <div className="flex h-[27px] shrink-0 items-center border-t border-[#c6c4c2] bg-[#f3f2f1] pb-[2px] pl-[10px] text-[14px] text-[#444]">
      <span className="w-[122px]">投影片 5 / 5</span>
      <span>中文 (台灣)</span>
      <div className="-mb-[2px] ml-auto flex h-[26px] items-center">
        <button className="flex items-center gap-[2px] text-[15px]"><Icon w={20} h={19}><path d="M6 5l4-4 4 4M0 8h20M0 13h20M0 18h20" /></Icon>備忘稿</button>
        <button aria-label="標準模式" className="ml-6 flex h-full w-[50px] items-center justify-center bg-[#d2d0ce]"><Icon w={18} h={16}><path d="M1 1h16v14H1zM5 1v14M5 12h12M8 4h6v5H8z" /></Icon></button>
        <button aria-label="投影片瀏覽" className="ml-4"><Icon w={18} h={16}><path d="M1 1h6v5H1zM11 1h6v5h-6zM1 10h6v5H1zM11 10h6v5h-6z" /></Icon></button>
        <button aria-label="閱讀檢視" className="ml-8"><Icon w={17} h={17}><path d="M1 2c3-1 5-1 7.500 1 2-2 4-2 7.500-1v13c-3-1-5-1-7.500 1-2-2-4-2-7.500-1zM8.500 3v13M3 5h3M3 8h3M3 11h3M11 5h3M11 8h3M11 11h3" strokeWidth="1.200" /></Icon></button>
        <button aria-label="投影片放映" className="ml-8"><Icon w={17} h={18}><path d="M0 1h17M2 1v9h13V1M8.500 10v6M4 17h9M6 5.500h5" /></Icon></button>
        <button aria-label="縮小" className="ml-[23px] w-[10px] text-[18px] leading-5">−</button>
        <label className="relative ml-2 flex h-4 w-[126px] items-center">
          <span className="sr-only">縮放</span>
          <input type="range" min={10} max={190} defaultValue={81} className="h-px w-full appearance-none bg-[#a19f9d] [&::-webkit-slider-thumb]:h-4 [&::-webkit-slider-thumb]:w-[6px] [&::-webkit-slider-thumb]:appearance-none [&::-webkit-slider-thumb]:bg-[#666]" />
          <span className="absolute left-1/2 h-2 w-px bg-[#a19f9d]" />
        </label>
        <button aria-label="放大" className="ml-[5px] w-[10px] text-[18px] leading-5">+</button>
        <span className="ml-[15px] text-[15px]">81%</span>
        <button aria-label="調整至視窗" className="ml-4 mr-[7px]"><Icon w={18} h={18}><path d="M6 6h6v6H6zM7 3l2-2 2 2M7 15l2 2 2-2M3 7L1 9l2 2M15 7l2 2-2 2" /></Icon></button>
      </div>
    </div>
  );
}

/* ---------- taskbar ---------- */

function App({ label, cls = "w-[52px]", bar = "", children }: P & { label: string; cls?: string; bar?: string }) {
  return (
    <button aria-label={label} className={`flex h-full flex-col items-center justify-between ${cls}`}>
      <span className="flex flex-1 items-center pt-[3px]">{children}</span>
      <span className={`h-[3px] w-full ${bar}`} />
    </button>
  );
}

function Taskbar() {
  const on = "bg-[#76b9ed]";
  return (
    <footer className="flex h-[50px] shrink-0 items-center bg-[#272c2c] text-white">
      <button aria-label="開始" className="flex w-[60px] justify-center"><Icon w={21} h={21}><path d="M0 3l9-1v8H0zM10 1.500L21 0v10H10zM0 11h9v8l-9-1zM10 11h11v10l-11-1.500z" fill="#fff" stroke="none" /></Icon></button>
      <label className="flex h-full w-[430px] items-center border border-[#5a5a5a] bg-[#333] pl-[14px]">
        <Icon w={20} h={21}><circle cx="13" cy="8" r="6.500" /><path d="M8 13l-7 7" /></Icon>
        <span className="sr-only">搜尋</span>
        <input className="ml-[15px] w-full bg-transparent text-[21px] font-light outline-none placeholder:text-[#d8d8d8]" placeholder="在這裡輸入文字來搜尋" />
      </label>
      <button aria-label="工作檢視" className="ml-[20px] mr-[27px]"><Icon w={20} h={20}><path d="M1 0v3h12V0M1 6h12v8H1zM1 20v-3h12v3M18 0v3M18 5v5M18 13v7" /></Icon></button>
      <div className="flex h-full gap-[10px]">
        <App label="IObit"><Icon w={31} h={31}><circle cx="15.500" cy="15.500" r="14" stroke="#20b573" strokeWidth="2" /><path d="M13 7l-3 10c-1 8 8 8 9 1l3-11" stroke="#20b573" strokeWidth="2" /></Icon></App>
        <App label="OneNote"><Icon w={31} h={28}><rect x="9" y="0" width="22" height="27" rx="2" fill="#ca64ea" stroke="none" /><path d="M24 7h7v7h-7z" fill="#ae4bd5" stroke="none" /><path d="M24 14h7v12h-7z" fill="#9332bf" stroke="none" /><rect x="0" y="6" width="17" height="16" rx="1" fill="#7719aa" stroke="none" /><path d="M5 18v-8l6 8v-8" stroke="#fff" strokeWidth="2" /></Icon></App>
        <App label="Cyber"><Icon w={30} h={31}><circle cx="15" cy="15" r="13.500" stroke="#1398f0" strokeWidth="2.500" /><path d="M20 9c-5-4-11 1-11 7 0 5 4 7 9 5" stroke="#1398f0" strokeWidth="3" /><circle cx="23" cy="24" r="5" fill="#1398f0" stroke="none" /><path d="M22 21l3 1-2 5" stroke="#fff" /></Icon></App>
        <App label="Chrome" bar={on}><Icon w={28} h={28} box="0 0 48 48"><g stroke="none"><path d="M24 24L3.200 12A24 24 0 0 1 44.800 12z" fill="#ea4335" /><path d="M24 24L3.200 12A24 24 0 0 0 24 48L34 30z" fill="#34a853" /><path d="M24 12h20.800A24 24 0 0 1 24 48l10-18z" fill="#fbbc05" /><circle cx="24" cy="24" r="11" fill="#fff" /><circle cx="24" cy="24" r="8.500" fill="#4285f4" /></g></Icon></App>
        <App label="檔案總管" bar={on}><Icon w={29} h={26}><g stroke="none"><path d="M0 2c0-1 1-2 2-2h9l3 4h15v20H0z" fill="#e9a820" /><path d="M0 7h29v16H0z" fill="#ffd968" /><path d="M5 14h19v11h-4v-6H9v6H5z" fill="#3d94dc" /></g></Icon></App>
        <App label="VS Code" bar={on}><Icon w={30} h={30}><path d="M22 0l8 4v22l-8 4L8 16l-5 5-3-2 5-4-5-4 3-2 5 5zM22 8l-8 7 8 7z" fill="#1f9cf0" stroke="none" /><path d="M22 0l8 4v22l-8 4z" fill="#0a79cc" stroke="none" /></Icon></App>
        <App label="SnagIt" cls="w-[52px] bg-[#3f6e40]" bar="bg-[#4be82f]"><Icon w={24} h={30}><path d="M17 1l6 6L9 29l-6-4z" fill="#eee" stroke="#222" /><path d="M14 3l5 2L8 28l-5-3z" fill="#c8102e" stroke="none" /><path d="M16 1l6 5-2 5-7-4z" fill="#444" stroke="#222" /><path d="M13 11l-4 9" stroke="#fff" strokeWidth="2" /></Icon></App>
        <App label="LINE" bar={on}><Icon w={31} h={31}><rect width="30" height="31" rx="6" fill="#00b900" stroke="none" /><ellipse cx="15" cy="14" rx="11" ry="9" fill="#fff" stroke="none" /><path d="M12 21l2 6 8-7z" fill="#fff" stroke="none" /><path d="M8 11v5h3M13 11v5M15 16v-5l3 5v-5M23 11h-3v5h3M20 13.500h3" stroke="#00b900" strokeWidth="1.200" /></Icon></App>
        <App label="PowerPoint" cls="-ml-[5px] w-[61px] bg-[#515657]" bar={on}><Icon w={30} h={28}><g stroke="none"><circle cx="16" cy="14" r="13.500" fill="#ed6c47" /><path d="M16 .5a13.500 13.500 0 0 1 13.500 13.500H16z" fill="#ff8f6b" /><path d="M3 14h26.500a13.500 13.500 0 0 1-26.500 0z" fill="#d35230" /><rect x="0" y="6" width="16" height="16" rx="1" fill="#c43e1c" /></g><path d="M6 18.500v-9h3c4 0 4 5.500 0 5.500H6" stroke="#fff" strokeWidth="2" /></Icon></App>
      </div>
      <div className="ml-auto flex h-full items-center">
        <Icon w={16} h={10}><path d="M1 9l7-7 7 7" /></Icon>
        <span className="ml-3 w-[35px] text-[17px]">中</span>
        <span className="flex size-[20px] items-center justify-center bg-white text-[15px] text-black">ㄅ</span>
        <time className="ml-[21px] w-[77px] whitespace-nowrap text-center text-[15px] leading-[23px]">下午 09:03<br />2021/4/28</time>
        <span className="relative ml-6 mr-[25px]">
          <Icon w={20} h={20}><path d="M0 0h20v16h-6l-5 4v-4H0z" fill="#fff" stroke="none" /><path d="M4 4.500h12M4 8.500h12M4 12.500h7" stroke="#272c2c" /></Icon>
          <span className="absolute -right-2 top-[9px] flex size-5 items-center justify-center rounded-full border border-[#999] bg-[#333] text-[15px] leading-none">2</span>
        </span>
        <span className="mr-[5px] h-full w-px bg-[#666]" />
      </div>
    </footer>
  );
}

export default function Window() {
  return (
    <div className={`flex min-h-screen flex-col bg-[#e6e6e6] ${UI}`}>
      <TitleBar />
      <Tabs />
      <Ribbon />
      <div className="relative flex flex-1">
        <Thumbnails />
        <Editor />
        <div role="status" className="absolute bottom-[2px] right-[21px] flex h-[45px] w-[117px] items-center gap-[13px] bg-[#1f2126] pl-[13px] text-[18px] text-white shadow-[2px_3px_4px_rgba(0,0,0,0.5)]">
          <Icon w={20} h={16} cls="text-[#6fcf8a]"><path d="M1 9l5 5L18 2" strokeWidth="2" /></Icon>
          <span className="pb-[4px]">未共用</span>
        </div>
      </div>
      <StatusBar />
      <Taskbar />
    </div>
  );
}
